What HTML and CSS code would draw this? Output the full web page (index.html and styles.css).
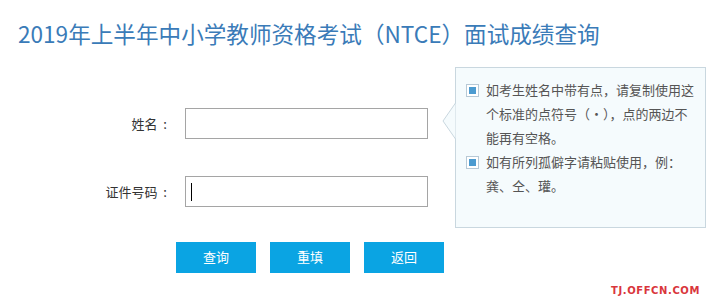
FILE: index.html
```html
<!DOCTYPE html>
<html lang="zh-CN">
<head>
<meta charset="utf-8">
<title>面试成绩查询</title>
<link rel="stylesheet" href="styles.css">
</head>
<body>
<div class="page">
  <h1 class="title">2019年上半年中小学教师资格考试（NTCE）面试成绩查询</h1>
  <div class="content">
    <div class="form">
      <div class="fields">
        <label class="label">姓名&nbsp;&nbsp;:</label>
        <div class="field"><input class="input" type="text"></div>
        <label class="label">证件号码&nbsp;&nbsp;:</label>
        <div class="field"><input class="input" type="text"><span class="caret"></span></div>
      </div>
      <div class="buttons">
        <button class="btn">查询</button>
        <button class="btn">重填</button>
        <button class="btn">返回</button>
      </div>
    </div>
    <div class="tip">
      <svg class="tip-arrow" width="14" height="36" viewBox="0 0 14 36">
        <path d="M13.5 0 L1 18 L13.5 36 Z" fill="#f5fbfd"/>
        <path d="M13.5 0 L1 18 L13.5 36" fill="none" stroke="#c9d7df" stroke-width="1"/>
      </svg>
      <div class="tip-item">
        <span class="check"><span class="check-in"></span></span>
        <p class="tip-text">如考生姓名中带有点，请复制使用这个标准的点符号（·），点的两边不能再有空格。</p>
      </div>
      <div class="tip-item">
        <span class="check"><span class="check-in"></span></span>
        <p class="tip-text">如有所列孤僻字请粘贴使用，例：<br>龚、仝、瓘。</p>
      </div>
    </div>
  </div>
  <div class="watermark">TJ.OFFCN.COM</div>
</div>
</body>
</html>
```
FILE: styles.css
```css
* { box-sizing: border-box; }
html, body { margin: 0; padding: 0; background: #fff; }
body {
  font-family: "Noto Sans CJK SC", "Noto Sans", sans-serif;
  width: 708px;
  height: 300px;
  overflow: hidden;
}
.page { position: relative; height: 300px; }
.title {
  margin: 0;
  padding: 19px 0 0 18px;
  font-size: 22.6px;
  line-height: 30px;
  font-weight: 400;
  color: #3a7bb8;
  letter-spacing: 0;
  white-space: nowrap;
}
.content {
  display: flex;
  margin-top: 18px;
}
.form { width: 455px; padding-top: 41px; }
.fields {
  display: grid;
  grid-template-columns: 175px 243px;
  column-gap: 10px;
  row-gap: 37px;
  align-items: center;
}
.label {
  text-align: right;
  font-size: 13px;
  color: #333;
  padding-right: 8px;
}
.field { position: relative; }
.input {
  display: block;
  width: 243px;
  height: 31px;
  border: 1px solid #a5a5a5;
  margin: 0;
  padding: 0 6px;
  background: #fff;
  outline: none;
}
.caret {
  position: absolute;
  left: 6px;
  top: 7px;
  width: 1px;
  height: 18px;
  background: #000;
}
.buttons {
  display: flex;
  gap: 14px;
  padding-left: 176px;
  margin-top: 35px;
}
.btn {
  width: 80px;
  height: 31px;
  border: 0;
  margin: 0;
  padding: 0 0 3px;
  background: #0aa4e3;
  color: #fff;
  font-family: "Noto Sans CJK SC", sans-serif;
  font-size: 13px;
}
.tip {
  position: relative;
  width: 251px;
  height: 161px;
  border: 1px solid #c9d7df;
  background: #f5fbfd;
  padding: 10px 0 0 10px;
}
.tip-arrow {
  position: absolute;
  left: -14px;
  top: 35px;
}
.tip-item { display: flex; align-items: flex-start; }
.check {
  flex: none;
  width: 13px;
  height: 13px;
  margin-top: 6px;
  margin-right: 7px;
  border: 1px solid #b7c9d6;
  background: #fff;
  padding: 2px;
}
.check-in { display: block; width: 100%; height: 100%; background: #4c9bd0; }
.tip-text {
  margin: 0;
  width: 212px;
  font-size: 13px;
  line-height: 24px;
  color: #555;
}
.watermark {
  position: absolute;
  right: 8px;
  bottom: 4px;
  font-family: "DejaVu Sans", sans-serif;
  font-weight: 700;
  font-size: 10px;
  letter-spacing: 0.6px;
  color: #d9363c;
}
```
